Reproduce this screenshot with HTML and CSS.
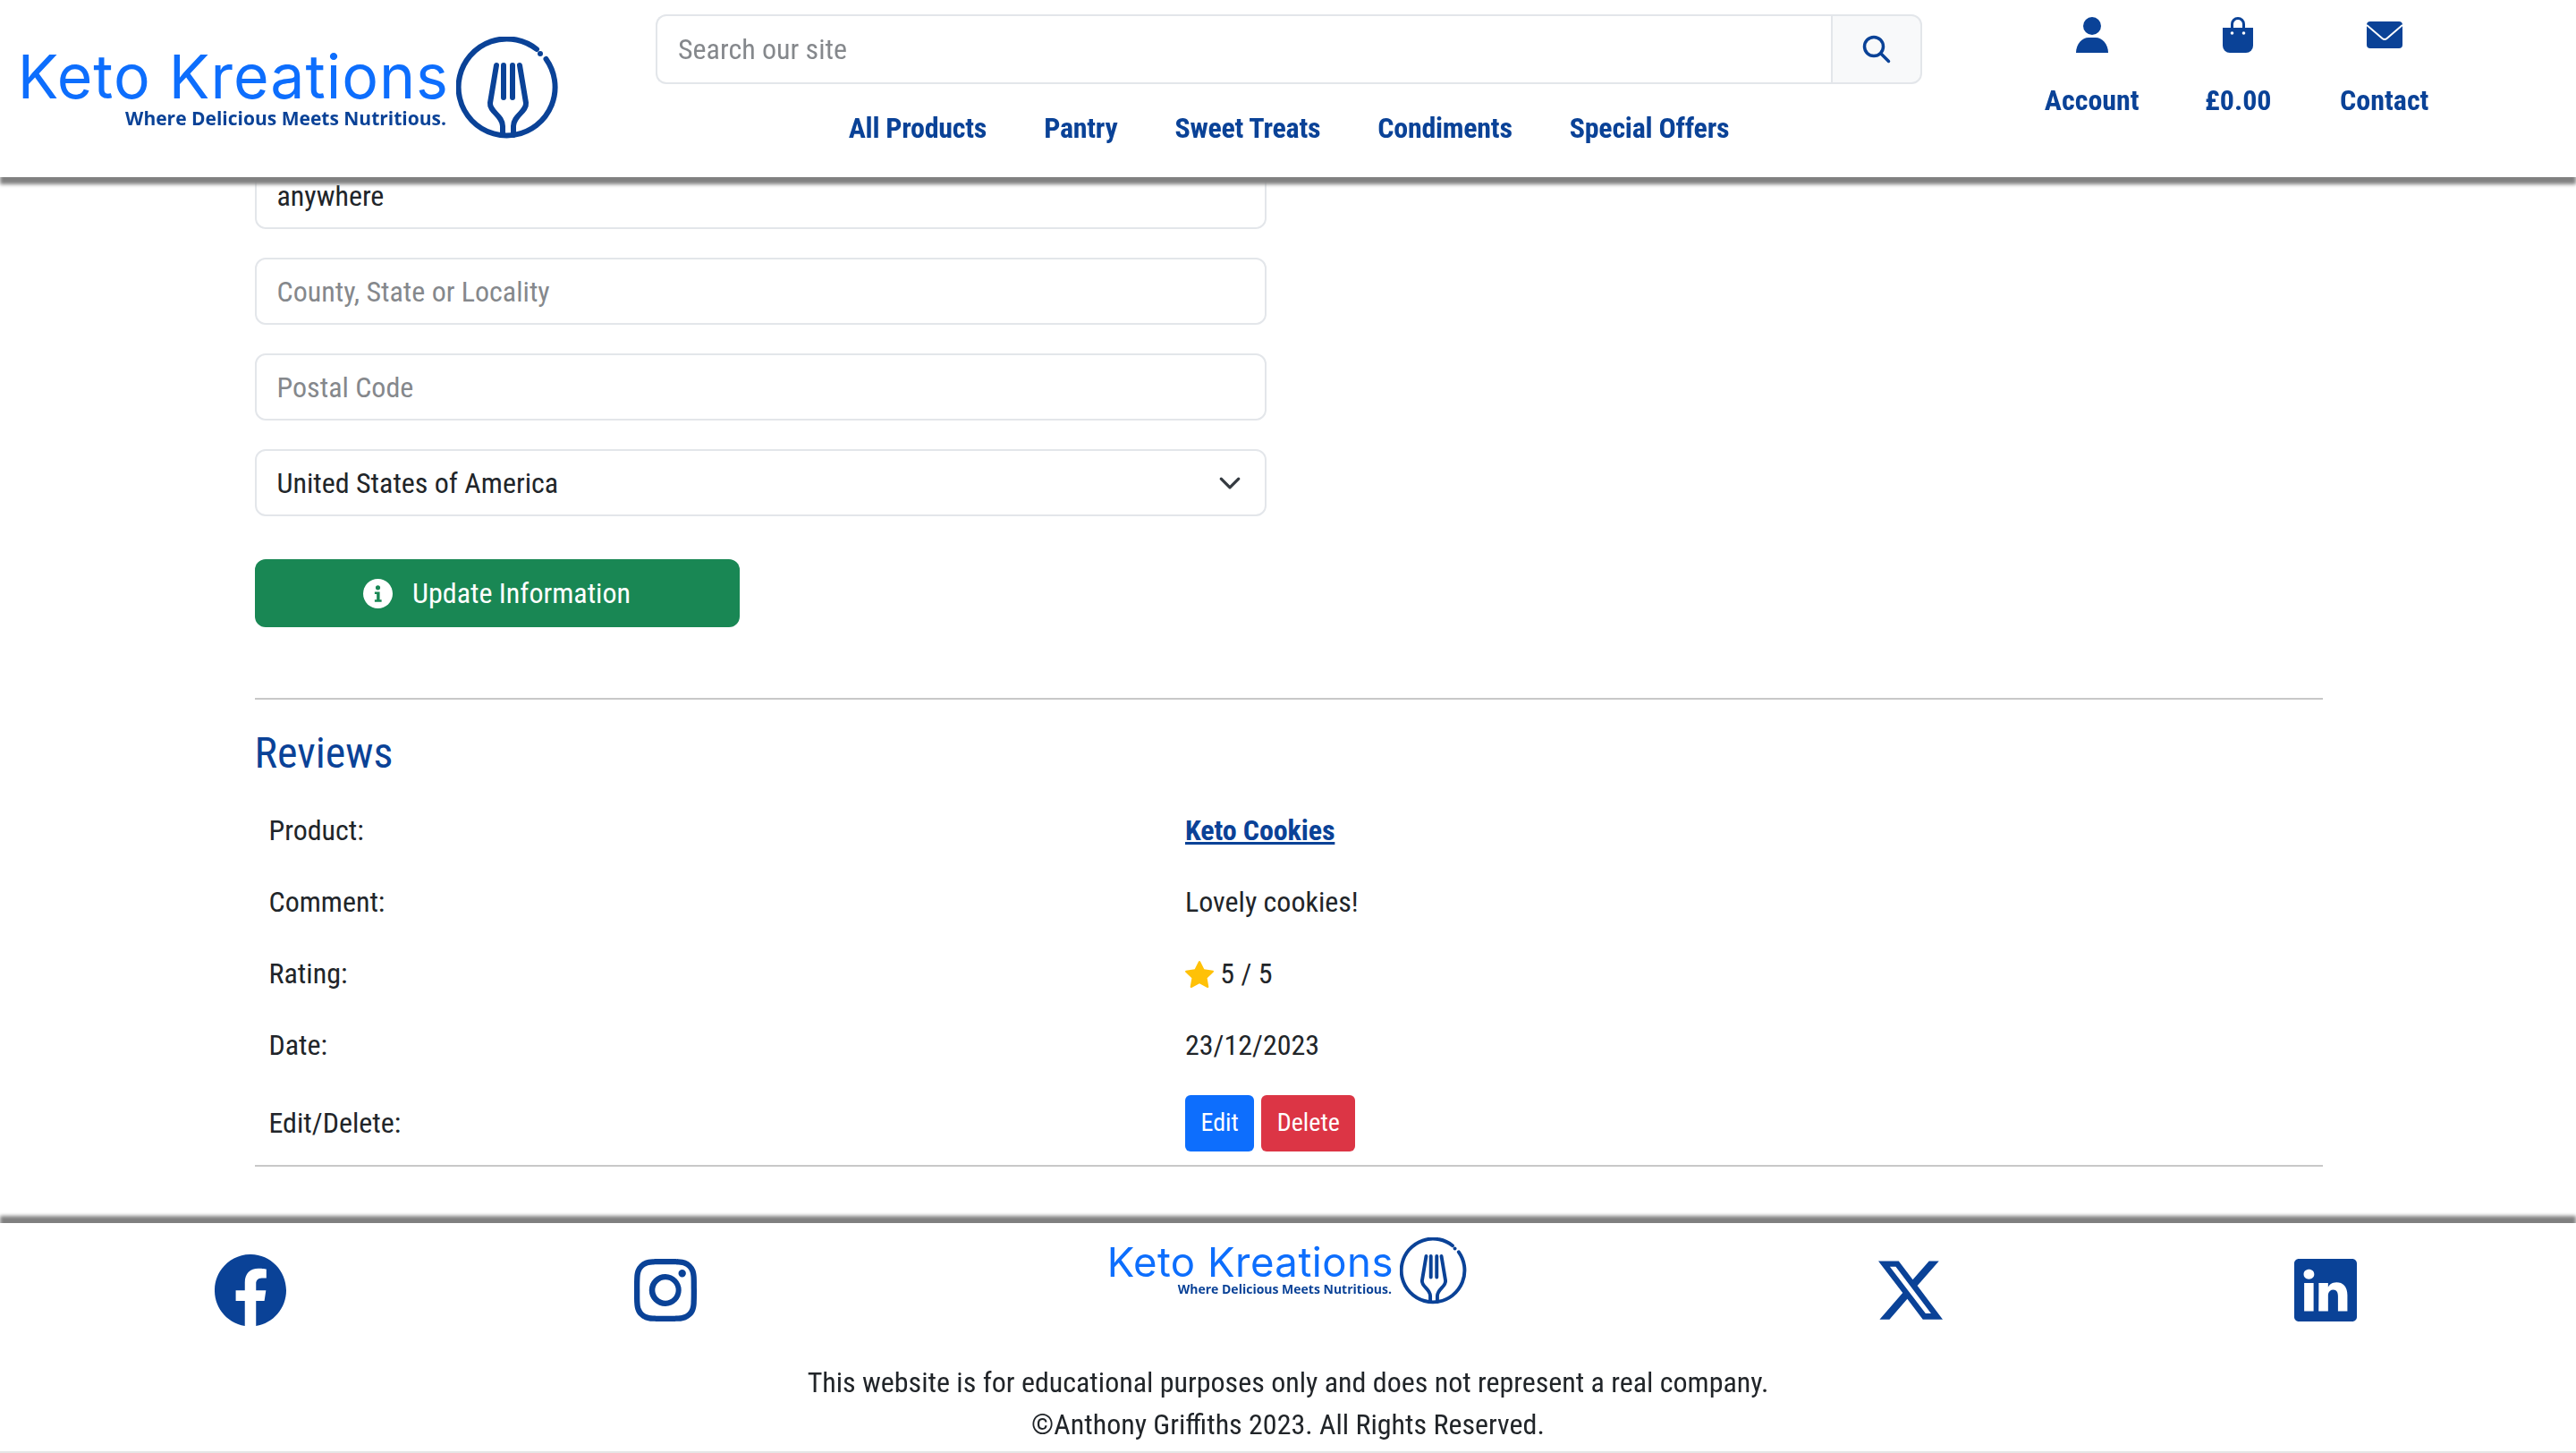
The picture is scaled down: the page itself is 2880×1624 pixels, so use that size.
FILE: index.html
```html
<!DOCTYPE html>
<html lang="en">
<head>
    <meta charset="UTF-8">
    <title>Keto Kreations</title>
    <link rel="stylesheet" href="styles.css">
</head>
<body>
<header class="site-header">
    <a class="logo" href="#">
        <span class="logo-text">
            <span class="logo-name">Keto Kreations</span>
            <span class="logo-tag">Where Delicious Meets Nutritious.</span>
        </span>
        <svg class="logo-mark" viewBox="0 0 116 116">
            <path d="M90 14A54 54 0 1 0 100.500 25" fill="none" stroke="#0a4297" stroke-width="6" stroke-linecap="round"/>
            <circle cx="94" cy="19" r="3" fill="#0a4297"/>
            <path d="M45 32 38 74C37 84 52 88 52 100V110M71 32 78 74C79 84 64 88 64 100V110M53 32V68M63 32V68" fill="none" stroke="#0a4297" stroke-width="6" stroke-linecap="round"/>
        </svg>
    </a>
    <div class="header-middle">
        <form class="search">
            <input class="search-input" type="text" placeholder="Search our site">
            <button class="search-button" type="button">
                <svg viewBox="0 0 32 32" width="32" height="32" fill="none" stroke="#0a4297" stroke-width="3.500" stroke-linecap="round"><circle cx="13" cy="13" r="10.500"/><path d="m21 21 8.500 8.500"/></svg>
            </button>
        </form>
        <nav class="main-nav">
            <a href="#">All Products</a>
            <a href="#">Pantry</a>
            <a href="#">Sweet Treats</a>
            <a href="#">Condiments</a>
            <a href="#">Special Offers</a>
        </nav>
    </div>
    <div class="header-links">
        <a href="#">
            <svg viewBox="0 0 40 40" width="40" height="40" fill="#0a4297"><circle cx="20" cy="10" r="10"/><path d="M2 40c0-10 7-17 14-17h8c7 0 14 7 14 17z"/></svg>
            <span>Account</span>
        </a>
        <a href="#">
            <svg viewBox="0 0 40 40" width="40" height="40"><path d="M3 12h34v20a8 8 0 0 1-8 8H11a8 8 0 0 1-8-8z" fill="#0a4297"/><path d="M13.500 14V8a6.500 6.500 0 0 1 13 0v6" fill="none" stroke="#0a4297" stroke-width="3"/><circle cx="13.500" cy="18" r="1.800" fill="#fff"/><circle cx="26.500" cy="18" r="1.800" fill="#fff"/></svg>
            <span>£0.00</span>
        </a>
        <a href="#">
            <svg viewBox="0 0 40 40" width="40" height="40"><rect y="5" width="40" height="30" rx="4" fill="#0a4297"/><path d="m0 9 17.500 15a4 4 0 0 0 5 0L40 9" fill="none" stroke="#fff" stroke-width="2"/></svg>
            <span>Contact</span>
        </a>
    </div>
</header>

<main class="container">
    <div class="form-field"><input type="text" value="anywhere"></div>
    <div class="form-field"><input type="text" placeholder="County, State or Locality"></div>
    <div class="form-field"><input type="text" placeholder="Postal Code"></div>
    <div class="form-field select-field">
        <span>United States of America</span>
        <svg viewBox="0 0 16 16" width="26" height="26" fill="none" stroke="#343a40" stroke-width="2" stroke-linecap="round" stroke-linejoin="round"><path d="m2 5 6 6 6-6"/></svg>
    </div>
    <button class="btn-update" type="button">
        <svg viewBox="0 0 32 32" width="33" height="33"><circle cx="16" cy="16" r="16" fill="#fff"/><circle cx="16" cy="9.500" r="2.500" fill="#198754"/><path d="M12.500 14h5.500v8.500h2V25h-7.500v-2.500h2.200v-6h-2.200z" fill="#198754"/></svg>
        Update Information
    </button>
    <hr class="section-rule">
    <h2 class="section-title">Reviews</h2>
    <table class="reviews">
        <tr><td>Product:</td><td><a href="#">Keto Cookies</a></td></tr>
        <tr><td>Comment:</td><td>Lovely cookies!</td></tr>
        <tr>
            <td>Rating:</td>
            <td>
                <svg class="star" viewBox="0 0 16 16" width="32" height="32" fill="#ffc107"><path d="M3.612 15.443c-.386.198-.824-.149-.746-.592l.830-4.730L.173 6.765c-.329-.314-.158-.888.283-.950l4.898-.696L7.538.792c.197-.390.730-.390.927 0l2.184 4.327 4.898.696c.441.062.612.636.282.950l-3.522 3.356.830 4.730c.078.443-.360.790-.746.592L8 13.187l-4.389 2.256z"/></svg>
                5 / 5
            </td>
        </tr>
        <tr><td>Date:</td><td>23/12/2023</td></tr>
        <tr class="last-row">
            <td>Edit/Delete:</td>
            <td><button class="btn-small btn-edit" type="button">Edit</button><button class="btn-small btn-delete" type="button">Delete</button></td>
        </tr>
    </table>
</main>

<footer class="site-footer">
    <div class="footer-icons">
        <svg class="icon-large" viewBox="0 0 16 16" fill="#0a4297"><path d="M16 8.049c0-4.446-3.582-8.050-8-8.050C3.580 0-.002 3.603-.002 8.050c0 4.017 2.926 7.347 6.750 7.951v-5.625h-2.030V8.050H6.750V6.275c0-2.017 1.195-3.131 3.022-3.131.876 0 1.791.157 1.791.157v1.980h-1.009c-.993 0-1.303.621-1.303 1.258v1.510h2.218l-.354 2.326H9.250V16c3.824-.604 6.750-3.934 6.750-7.951"/></svg>
        <svg class="icon-small" viewBox="0 0 16 16" fill="#0a4297"><path d="M8 0C5.829 0 5.556.010 4.703.048 3.850.088 3.269.222 2.760.420a3.900 3.900 0 0 0-1.417.923A3.900 3.900 0 0 0 .420 2.760C.222 3.268.087 3.850.048 4.700.010 5.555 0 5.827 0 8.001c0 2.172.010 2.444.048 3.297.040.852.174 1.433.372 1.942.205.526.478.972.923 1.417.444.445.890.719 1.416.923.510.198 1.090.333 1.942.372C5.555 15.990 5.827 16 8 16s2.444-.010 3.298-.048c.851-.040 1.434-.174 1.943-.372a3.900 3.900 0 0 0 1.416-.923c.445-.445.718-.891.923-1.417.197-.509.332-1.090.372-1.942C15.990 10.445 16 10.173 16 8s-.010-2.445-.048-3.299c-.040-.851-.175-1.433-.372-1.941a3.900 3.900 0 0 0-.923-1.417A3.900 3.900 0 0 0 13.240.420c-.510-.198-1.092-.333-1.943-.372C10.443.010 10.172 0 7.998 0zm-.717 1.442h.718c2.136 0 2.389.007 3.232.046.780.035 1.204.166 1.486.275.373.145.640.319.920.599s.453.546.598.920c.110.281.240.705.275 1.485.039.843.047 1.096.047 3.231s-.008 2.389-.047 3.232c-.035.780-.166 1.203-.275 1.485a2.500 2.500 0 0 1-.599.919c-.280.280-.546.453-.920.598-.280.110-.704.240-1.485.276-.843.038-1.096.047-3.232.047s-2.390-.009-3.233-.047c-.780-.036-1.203-.166-1.485-.276a2.500 2.500 0 0 1-.920-.598 2.500 2.500 0 0 1-.600-.920c-.109-.281-.240-.705-.275-1.485-.038-.843-.046-1.096-.046-3.233s.008-2.388.046-3.231c.036-.780.166-1.204.276-1.486.145-.373.319-.640.599-.920s.546-.453.920-.598c.282-.110.705-.240 1.485-.276.738-.034 1.024-.044 2.515-.045zm4.988 1.328a.960.960 0 1 0 0 1.920.960.960 0 0 0 0-1.920m-4.270 1.122a4.109 4.109 0 1 0 0 8.217 4.109 4.109 0 0 0 0-8.217m0 1.441a2.667 2.667 0 1 1 0 5.334 2.667 2.667 0 0 1 0-5.334"/></svg>
        <a class="logo logo-small" href="#">
            <span class="logo-text">
                <span class="logo-name">Keto Kreations</span>
                <span class="logo-tag">Where Delicious Meets Nutritious.</span>
            </span>
            <svg class="logo-mark" viewBox="0 0 116 116">
                <path d="M90 14A54 54 0 1 0 100.500 25" fill="none" stroke="#0a4297" stroke-width="6" stroke-linecap="round"/>
                <circle cx="94" cy="19" r="3" fill="#0a4297"/>
                <path d="M45 32 38 74C37 84 52 88 52 100V110M71 32 78 74C79 84 64 88 64 100V110M53 32V68M63 32V68" fill="none" stroke="#0a4297" stroke-width="6" stroke-linecap="round"/>
            </svg>
        </a>
        <svg class="icon-x" viewBox="0 0 16 16" fill="#0a4297"><path d="M12.600.750h2.454l-5.360 6.142L16 15.250h-4.937l-3.867-5.070-4.425 5.070H.316l5.733-6.570L0 .750h5.063l3.495 4.633L12.601.750Zm-.860 13.028h1.360L4.323 2.145H2.865z"/></svg>
        <svg class="icon-small" viewBox="0 0 16 16" fill="#0a4297"><path d="M0 1.146C0 .513.526 0 1.175 0h13.650C15.474 0 16 .513 16 1.146v13.708c0 .633-.526 1.146-1.175 1.146H1.175C.526 16 0 15.487 0 14.854zm4.943 12.248V6.169H2.542v7.225zm-1.200-8.212c.837 0 1.358-.554 1.358-1.248-.015-.709-.520-1.248-1.342-1.248S2.410 3.226 2.410 3.934c0 .694.521 1.248 1.327 1.248zm4.908 8.212V9.359c0-.216.016-.432.080-.586.173-.431.568-.878 1.232-.878.869 0 1.216.662 1.216 1.634v3.865h2.401V9.250c0-2.220-1.184-3.252-2.764-3.252-1.274 0-1.845.700-2.165 1.193v.025h-.016l.016-.025V6.169h-2.400c.030.678 0 7.225 0 7.225z"/></svg>
    </div>
    <p class="footer-note">This website is for educational purposes only and does not represent a real company.<br>©Anthony Griffiths 2023. All Rights Reserved.</p>
</footer>
</body>
</html>
```

FILE: styles.css
```css
* {
    box-sizing: border-box;
}

body {
    margin: 0;
    height: 1624px;
    overflow: hidden;
    background-color: #fff;
    color: #212529;
    font-family: Roboto, sans-serif;
    font-size: 32px;
    font-stretch: 75%;
    line-height: 48px;
}

a {
    color: #0a4297;
    text-decoration: none;
}

/* Header */
.site-header {
    position: fixed;
    top: 0;
    left: 0;
    right: 0;
    z-index: 10;
    display: flex;
    height: 198px;
    background-color: #fff;
    box-shadow: 0 8px 4px #808080;
}

.logo {
    display: flex;
    align-items: flex-start;
    width: 733px;
    padding: 41px 0 0 24px;
    align-self: flex-start;
}

.logo-text {
    display: flex;
    flex-direction: column;
    align-items: flex-end;
    width: 478px;
    padding-top: 10px;
}

.logo-name {
    color: #0d6efd;
    font-family: Inter, sans-serif;
    font-size: 68px;
    font-stretch: normal;
    line-height: 68px;
    letter-spacing: 1px;
    white-space: nowrap;
}

.logo-tag {
    margin: 2px 3px 0 0;
    color: #0a4297;
    font-family: "Open Sans", sans-serif;
    font-size: 21px;
    font-weight: 700;
    font-stretch: normal;
    line-height: 22px;
    white-space: nowrap;
}

.logo-mark {
    flex: none;
    width: 116px;
    height: 116px;
    margin-left: 8px;
}

.header-middle {
    width: 1416px;
}

.search {
    display: flex;
    height: 78px;
    margin-top: 16px;
}

.search-input {
    flex: 1;
    padding: 0 23px;
    border: 2px solid #e3e6ea;
    border-right: none;
    border-radius: 12px 0 0 12px;
    font: inherit;
    font-stretch: 75%;
    outline: none;
}

.search-input::placeholder,
.form-field input::placeholder {
    color: #85888c;
}

.search-button {
    width: 102px;
    padding-top: 4px;
    border: 2px solid #e3e6ea;
    border-radius: 0 12px 12px 0;
    background-color: #f8f9fa;
}

.main-nav {
    display: flex;
    justify-content: center;
    gap: 64px;
    margin-top: 25px;
    font-weight: 700;
    letter-spacing: -0.25px;
}

.header-links {
    display: flex;
    margin-left: 108px;
}

.header-links a {
    display: flex;
    flex-direction: column;
    align-items: center;
    width: 163.500px;
    padding-top: 19px;
    font-weight: 700;
}

.header-links span {
    margin-top: 29px;
}

/* Form */
.container {
    width: 2312px;
    margin-left: 284.500px;
    padding-top: 181px;
}

.form-field {
    display: flex;
    align-items: center;
    justify-content: space-between;
    width: 1131px;
    height: 75px;
    margin-bottom: 32px;
    border: 2px solid #e3e6ea;
    border-radius: 12px;
}

.form-field input {
    width: 100%;
    height: 100%;
    padding: 0 23px;
    border: none;
    border-radius: 12px;
    color: #212529;
    font: inherit;
    font-stretch: 75%;
    outline: none;
}

.select-field {
    padding: 0 26px 0 23px;
    margin-bottom: 48px;
}

.btn-update {
    display: flex;
    align-items: center;
    justify-content: center;
    gap: 22px;
    width: 542px;
    height: 76px;
    border: none;
    border-radius: 12px;
    background-color: #198754;
    color: #fff;
    font: inherit;
    font-stretch: 75%;
}

.section-rule {
    height: 2px;
    margin: 79px 0 0;
    border: none;
    background-color: #c8c8c8;
}

.section-title {
    margin: 31px 0 0;
    color: #0a4297;
    font-size: 48px;
    font-weight: 400;
    line-height: 58px;
}

.reviews {
    width: 100%;
    margin-top: 17px;
    border-collapse: collapse;
    border-bottom: 2px solid #c8c8c8;
}

.reviews td {
    height: 80px;
    padding: 0 16px;
    vertical-align: middle;
}

.reviews td:first-child {
    width: 1024.500px;
}

.reviews a {
    color: #0a4297;
    font-weight: 700;
    letter-spacing: -0.1px;
    text-decoration: underline;
}

.star {
    vertical-align: -6px;
}

.last-row td {
    height: 95px;
}

.btn-small {
    height: 63px;
    padding: 0 17.500px;
    border: none;
    border-radius: 6px;
    color: #fff;
    font: inherit;
    font-size: 28px;
    font-stretch: 75%;
}

.btn-edit {
    margin-right: 8px;
    background-color: #0d6efd;
}

.btn-delete {
    background-color: #dc3545;
}

/* Footer */
.site-footer {
    position: fixed;
    top: 1367px;
    left: 0;
    right: 0;
    height: 257px;
    background-color: #fff;
    border-bottom: 2px solid #e6e6e6;
    box-shadow: 0 -8px 4px #808080;
}

.footer-icons {
    display: grid;
    grid-template-columns: 560px 368px 1024px 368px 560px;
    justify-items: center;
    align-items: center;
    height: 150px;
}

.icon-large {
    width: 80px;
    height: 80px;
}

.icon-small {
    width: 70px;
    height: 70px;
}

.icon-x {
    width: 72px;
    height: 72px;
}

.logo-small {
    width: auto;
    padding: 0;
    align-self: start;
    margin-top: 16px;
}

.logo-small .logo-text {
    width: 319px;
    padding-top: 6px;
}

.logo-small .logo-name {
    font-size: 45.500px;
    line-height: 44px;
    letter-spacing: 0.5px;
}

.logo-small .logo-tag {
    margin: 0 2px 0 0;
    font-size: 14px;
    line-height: 16px;
}

.logo-small .logo-mark {
    width: 76px;
    height: 76px;
    margin-left: 7px;
}

.footer-note {
    margin: 0;
    padding-top: 5px;
    text-align: center;
    line-height: 47px;
}
```
